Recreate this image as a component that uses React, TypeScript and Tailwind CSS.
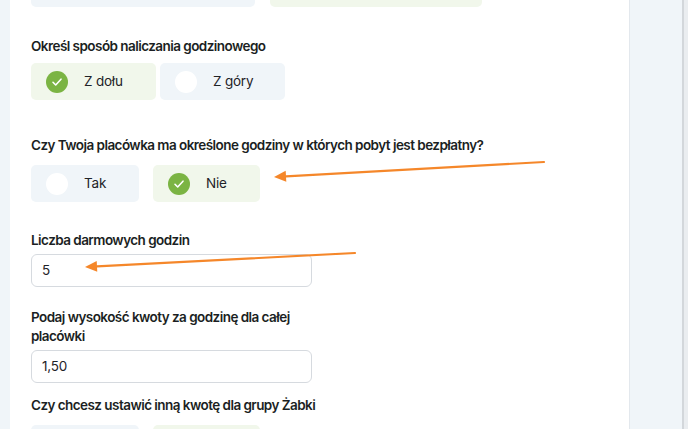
import React from 'react';

type Choice = {
  label?: string;
  checked: boolean;
  width: string;
};

function CheckCircle({ checked }: { checked: boolean }) {
  if (!checked) {
    return <span className="block h-[22px] w-[22px] shrink-0 rounded-full bg-white" />;
  }

  return (
    <span className="flex h-[22px] w-[22px] shrink-0 items-center justify-center rounded-full bg-[#7bb443]">
      <svg width="12" height="12" viewBox="0 0 12 12" fill="none">
        <path d="M2 6.3 4.7 9 10 3.2" stroke="white" strokeWidth="1.6" strokeLinecap="round" strokeLinejoin="round" />
      </svg>
    </span>
  );
}

function ChoiceBox({ label, checked, width }: Choice) {
  return (
    <div
      className={`flex h-[37px] items-center gap-4 rounded-[5px] pl-[15px] text-[13.5px] tracking-[-0.2px] text-[#1f2328] ${width} ${
        checked ? 'bg-[#f1f7eb]' : 'bg-[#f0f5f9]'
      }`}
    >
      <CheckCircle checked={checked} />
      {label && <span>{label}</span>}
    </div>
  );
}

function Heading({ children, className = '' }: { children: React.ReactNode; className?: string }) {
  return (
    <h3 className={`text-[13.5px] font-semibold tracking-[-0.55px] text-[#1b1f23] ${className}`}>
      {children}
    </h3>
  );
}

function TextInput({ value }: { value: string }) {
  return (
    <div className="flex h-[33px] w-[281px] items-center rounded-[6px] border border-[#d6dadf] bg-white pl-[10px] text-[13.5px] tracking-[-0.2px] text-[#1f2328]">
      {value}
    </div>
  );
}

function Arrow({ x1, y1, x2, y2 }: { x1: number; y1: number; x2: number; y2: number }) {
  const angle = Math.atan2(y2 - y1, x2 - x1);
  const len = 12;
  const half = 5.5;
  const bx = x2 - Math.cos(angle) * len;
  const by = y2 - Math.sin(angle) * len;
  const px = -Math.sin(angle) * half;
  const py = Math.cos(angle) * half;

  return (
    <g>
      <line x1={x1} y1={y1} x2={bx} y2={by} stroke="#f5872a" strokeWidth="2.2" strokeLinecap="round" />
      <polygon points={`${x2},${y2} ${bx + px},${by + py} ${bx - px},${by - py}`} fill="#f5872a" />
    </g>
  );
}

export default function App() {
  return (
    <div className="relative flex h-[429px] w-[688px] overflow-hidden bg-white font-['Inter','Noto_Sans',sans-serif]">
      <div className="w-[10px] shrink-0 bg-[#f0f5f9]" />

      <main className="w-[619px] shrink-0 overflow-hidden bg-white pl-[21px]">
        <div className="-mt-[30px]">
          <div className="flex gap-[15px]">
            <div className="h-[37px] w-[224px] rounded-[5px] bg-[#f0f5f9]" />
            <div className="h-[37px] w-[212px] rounded-[5px] bg-[#f1f7eb]" />
          </div>

          <Heading className="mt-[29px] leading-[20px]">Określ sposób naliczania godzinowego</Heading>
          <div className="mt-[7px] flex gap-[4px]">
            <ChoiceBox label="Z dołu" checked width="w-[125px]" />
            <ChoiceBox label="Z góry" checked={false} width="w-[125px]" />
          </div>

          <Heading className="mt-[35px] leading-[20px]">
            Czy Twoja placówka ma określone godziny w których pobyt jest bezpłatny?
          </Heading>
          <div className="mt-[10px] flex gap-[14px]">
            <ChoiceBox label="Tak" checked={false} width="w-[108px]" />
            <ChoiceBox label="Nie" checked width="w-[107px]" />
          </div>

          <Heading className="mt-[28px] leading-[20px]">Liczba darmowych godzin</Heading>
          <div className="mt-[4px]">
            <TextInput value="5" />
          </div>

          <Heading className="mt-[21px] w-[281px] leading-[19px]">
            Podaj wysokość kwoty za godzinę dla całej placówki
          </Heading>
          <div className="mt-[4px]">
            <TextInput value="1,50" />
          </div>

          <Heading className="mt-[12px] leading-[20px]">Czy chcesz ustawić inną kwotę dla grupy Żabki</Heading>
          <div className="mt-[10px] flex gap-[14px]">
            <ChoiceBox checked={false} width="w-[108px]" />
            <ChoiceBox checked width="w-[107px]" />
          </div>
        </div>
      </main>

      <aside className="w-[53px] shrink-0 border-l border-[#e3e8ed] bg-[#f0f5f9]" />
      <div className="w-[6px] shrink-0 border-l-2 border-[#d3d7db] bg-[#eaedf0]" />

      <svg className="pointer-events-none absolute inset-0" width="688" height="429">
        <Arrow x1={544} y1={162} x2={274} y2={177} />
        <Arrow x1={355} y1={253} x2={85} y2={267} />
      </svg>
    </div>
  );
}
